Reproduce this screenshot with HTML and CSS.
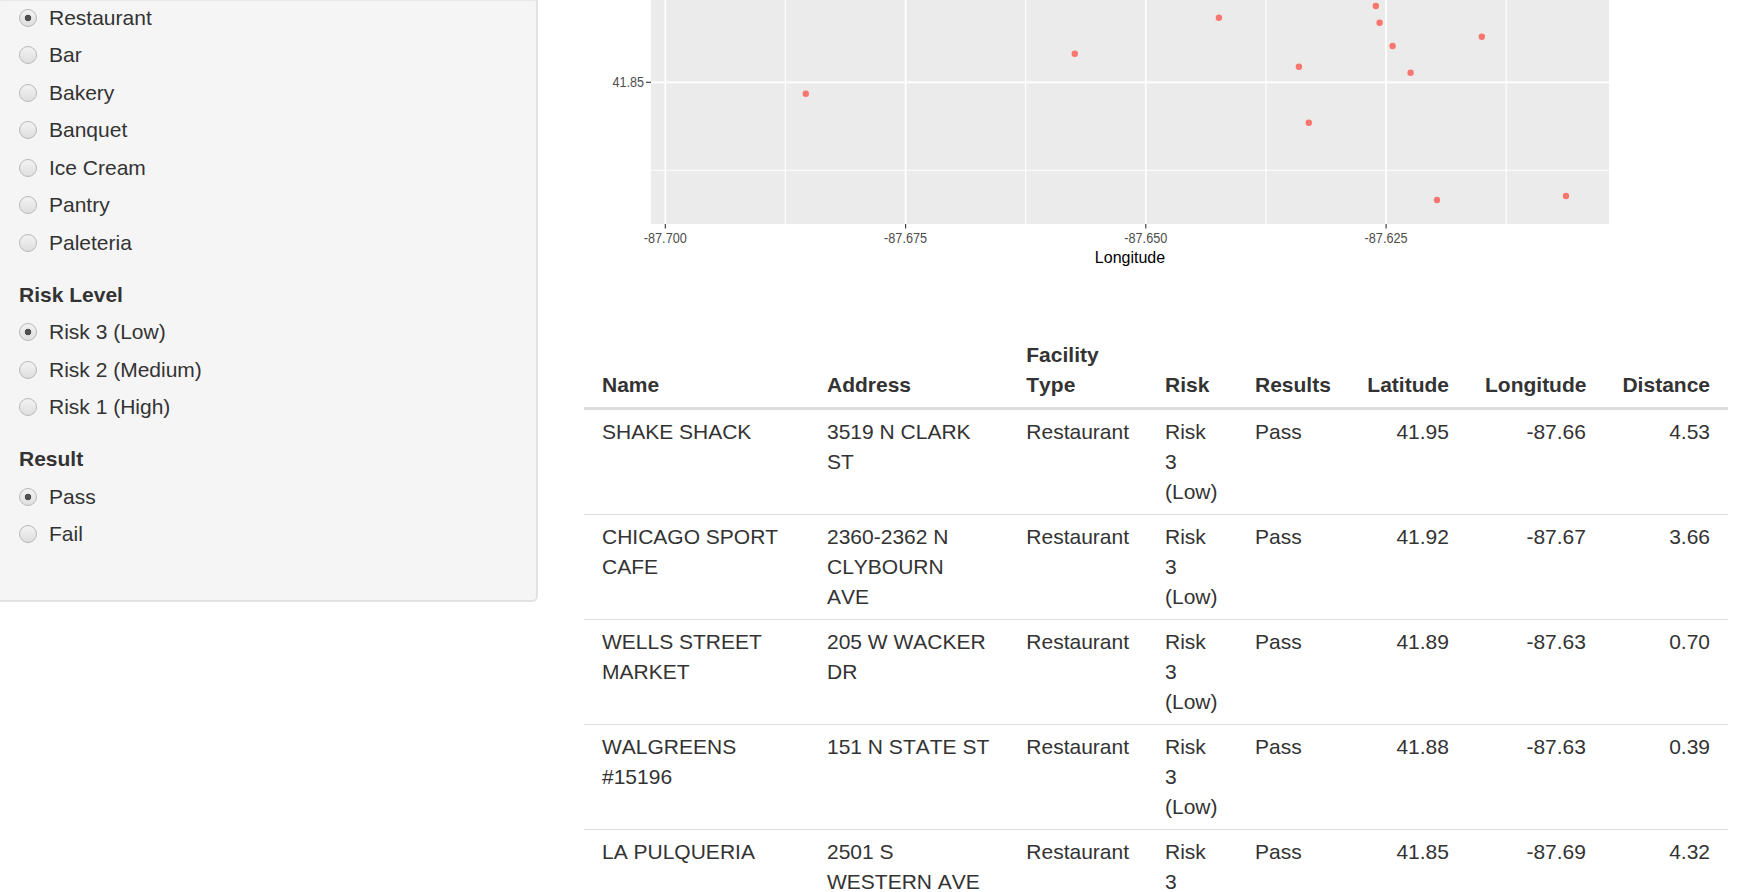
FILE: index.html
```html
<!DOCTYPE html>
<html lang="en">
<head>
<meta charset="utf-8">
<title>Food Inspections</title>
<link rel="stylesheet" href="styles.css">
</head>
<body>
<div class="page">
  <aside class="sidebar">
    <div class="well">
      <div class="form-group">
        <div class="options">
          <label class="radio"><input type="radio" name="facility" checked><span>Restaurant</span></label>
          <label class="radio"><input type="radio" name="facility"><span>Bar</span></label>
          <label class="radio"><input type="radio" name="facility"><span>Bakery</span></label>
          <label class="radio"><input type="radio" name="facility"><span>Banquet</span></label>
          <label class="radio"><input type="radio" name="facility"><span>Ice Cream</span></label>
          <label class="radio"><input type="radio" name="facility"><span>Pantry</span></label>
          <label class="radio"><input type="radio" name="facility"><span>Paleteria</span></label>
        </div>
      </div>
      <div class="form-group">
        <div class="control-label">Risk Level</div>
        <div class="options">
          <label class="radio"><input type="radio" name="risk" checked><span>Risk 3 (Low)</span></label>
          <label class="radio"><input type="radio" name="risk"><span>Risk 2 (Medium)</span></label>
          <label class="radio"><input type="radio" name="risk"><span>Risk 1 (High)</span></label>
        </div>
      </div>
      <div class="form-group">
        <div class="control-label">Result</div>
        <div class="options">
          <label class="radio"><input type="radio" name="result" checked><span>Pass</span></label>
          <label class="radio"><input type="radio" name="result"><span>Fail</span></label>
        </div>
      </div>
    </div>
  </aside>

  <main class="content">
    <svg class="plot" width="1144" height="276" viewBox="0 0 1144 276" xmlns="http://www.w3.org/2000/svg">
      <rect x="67" y="0" width="958" height="224" fill="#EBEBEB"/>
      <g stroke="#FFFFFF" stroke-width="1.1">
        <line x1="201.4" y1="0" x2="201.4" y2="224"/>
        <line x1="441.7" y1="0" x2="441.7" y2="224"/>
        <line x1="682.0" y1="0" x2="682.0" y2="224"/>
        <line x1="922.2" y1="0" x2="922.2" y2="224"/>
        <line x1="67" y1="170.3" x2="1025" y2="170.3"/>
      </g>
      <g stroke="#FFFFFF" stroke-width="1.7">
        <line x1="81.3" y1="0" x2="81.3" y2="224"/>
        <line x1="321.6" y1="0" x2="321.6" y2="224"/>
        <line x1="561.8" y1="0" x2="561.8" y2="224"/>
        <line x1="802.1" y1="0" x2="802.1" y2="224"/>
        <line x1="67" y1="82.3" x2="1025" y2="82.3"/>
      </g>
      <g fill="#F8766D">
        <circle cx="221.8" cy="93.8" r="3.2"/>
        <circle cx="490.8" cy="53.7" r="3.2"/>
        <circle cx="634.9" cy="17.7" r="3.2"/>
        <circle cx="714.9" cy="66.7" r="3.2"/>
        <circle cx="724.8" cy="122.7" r="3.2"/>
        <circle cx="791.8" cy="6" r="3.2"/>
        <circle cx="795.6" cy="22.7" r="3.2"/>
        <circle cx="808.6" cy="46" r="3.2"/>
        <circle cx="826.6" cy="72.7" r="3.2"/>
        <circle cx="897.8" cy="36.7" r="3.2"/>
        <circle cx="853" cy="200" r="3.2"/>
        <circle cx="982" cy="196" r="3.2"/>
      </g>
      <g stroke="#333333" stroke-width="1.1">
        <line x1="62" y1="82.3" x2="67" y2="82.3"/>
        <line x1="81.3" y1="224" x2="81.3" y2="228.5"/>
        <line x1="321.6" y1="224" x2="321.6" y2="228.5"/>
        <line x1="561.8" y1="224" x2="561.8" y2="228.5"/>
        <line x1="802.1" y1="224" x2="802.1" y2="228.5"/>
      </g>
      <g class="axis-text" fill="#4D4D4D" font-size="14">
        <text x="60" y="87.4" text-anchor="end" textLength="31.5" lengthAdjust="spacingAndGlyphs">41.85</text>
        <text x="81.3" y="243.2" text-anchor="middle" textLength="43" lengthAdjust="spacingAndGlyphs">-87.700</text>
        <text x="321.6" y="243.2" text-anchor="middle" textLength="43" lengthAdjust="spacingAndGlyphs">-87.675</text>
        <text x="561.8" y="243.2" text-anchor="middle" textLength="43" lengthAdjust="spacingAndGlyphs">-87.650</text>
        <text x="802.1" y="243.2" text-anchor="middle" textLength="43" lengthAdjust="spacingAndGlyphs">-87.625</text>
      </g>
      <text class="axis-title" x="546" y="263" text-anchor="middle" font-size="16" fill="#000000">Longitude</text>
    </svg>

    <table class="results">
      <colgroup>
        <col class="c-name"><col class="c-address"><col class="c-type"><col class="c-risk">
        <col class="c-results"><col class="c-lat"><col class="c-lon"><col class="c-dist">
      </colgroup>
      <thead>
        <tr>
          <th>Name</th><th>Address</th><th>Facility Type</th><th>Risk</th>
          <th>Results</th><th class="num">Latitude</th><th class="num">Longitude</th><th class="num">Distance</th>
        </tr>
      </thead>
      <tbody>
        <tr>
          <td>SHAKE SHACK</td><td>3519 N CLARK ST</td><td>Restaurant</td><td>Risk 3 (Low)</td>
          <td>Pass</td><td class="num">41.95</td><td class="num">-87.66</td><td class="num">4.53</td>
        </tr>
        <tr>
          <td>CHICAGO SPORT CAFE</td><td>2360-2362 N CLYBOURN AVE</td><td>Restaurant</td><td>Risk 3 (Low)</td>
          <td>Pass</td><td class="num">41.92</td><td class="num">-87.67</td><td class="num">3.66</td>
        </tr>
        <tr>
          <td>WELLS STREET MARKET</td><td>205 W WACKER DR</td><td>Restaurant</td><td>Risk 3 (Low)</td>
          <td>Pass</td><td class="num">41.89</td><td class="num">-87.63</td><td class="num">0.70</td>
        </tr>
        <tr>
          <td>WALGREENS #15196</td><td>151 N STATE ST</td><td>Restaurant</td><td>Risk 3 (Low)</td>
          <td>Pass</td><td class="num">41.88</td><td class="num">-87.63</td><td class="num">0.39</td>
        </tr>
        <tr>
          <td>LA PULQUERIA</td><td>2501 S WESTERN AVE</td><td>Restaurant</td><td>Risk 3 (Low)</td>
          <td>Pass</td><td class="num">41.85</td><td class="num">-87.69</td><td class="num">4.32</td>
        </tr>
      </tbody>
    </table>
  </main>
</div>
</body>
</html>
```

FILE: styles.css
```css
html, body {
  margin: 0;
  padding: 0;
  background: #ffffff;
  overflow: hidden;
}

body {
  font-family: "Liberation Sans", Arial, Helvetica, sans-serif;
  font-size: 21px;
  line-height: 30px;
  color: #333333;
  font-kerning: none;
}

.page {
  display: flex;
  align-items: flex-start;
}

/* ---------- sidebar ---------- */
.sidebar {
  flex: none;
  width: 538px;
  margin-right: 46px;
}

.well {
  box-sizing: border-box;
  width: 538px;
  background: #f5f5f5;
  border-right: 2px solid #e2e2e2;
  border-bottom: 2px solid #e2e2e2;
  border-bottom-right-radius: 6px;
  box-shadow: inset 0 1px 1px rgba(0, 0, 0, 0.05);
  padding: 2.5px 28px 28.5px 19px;
}

.form-group {
  margin-bottom: 22px;
}

.control-label {
  font-weight: bold;
  line-height: 30px;
  margin-bottom: 7.5px;
}

.options {
  display: flex;
  flex-direction: column;
  gap: 7.5px;
}

.radio {
  display: flex;
  align-items: center;
  height: 30px;
  cursor: pointer;
}

.radio input {
  appearance: none;
  -webkit-appearance: none;
  flex: none;
  width: 18px;
  height: 18px;
  margin: 0 12px 0 0;
  border-radius: 50%;
  border: 1px solid #b9b9b9;
  background: linear-gradient(#f3f3f3, #dedede);
  box-sizing: border-box;
}

.radio input:checked {
  background:
    radial-gradient(circle, #505050 0, #505050 3px, rgba(80, 80, 80, 0) 3.6px),
    linear-gradient(#f3f3f3, #dedede);
}

/* ---------- main content ---------- */
.content {
  flex: none;
  width: 1144px;
}

.plot {
  display: block;
  font-family: "Liberation Sans", Arial, sans-serif;
}

.results {
  width: 1144px;
  margin-top: 57px;
  table-layout: fixed;
  border-collapse: separate;
  border-spacing: 0;
}

.c-name { width: 225px; }
.c-address { width: 199.3px; }
.c-type { width: 138.7px; }
.c-risk { width: 90px; }
.c-results { width: 112px; }
.c-lat { width: 118px; }
.c-lon { width: 137px; }
.c-dist { width: 124px; }

.results th,
.results td {
  padding: 7px 18px;
  line-height: 30px;
  text-align: left;
}

.results th {
  font-weight: bold;
  vertical-align: bottom;
  border-bottom: 3px solid #dddddd;
}

.results td {
  vertical-align: top;
}

.results tbody tr + tr td {
  border-top: 1px solid #dddddd;
}

.results .num {
  text-align: right;
}
```
